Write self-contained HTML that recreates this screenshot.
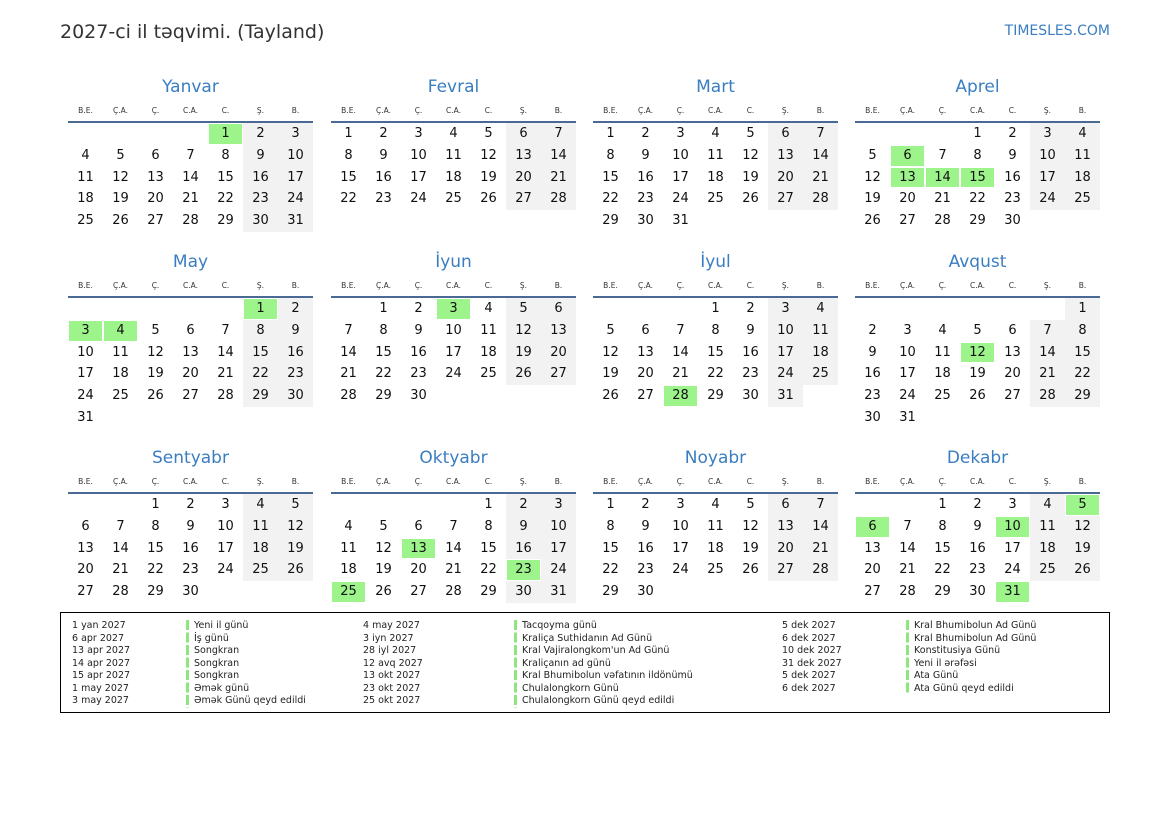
<!DOCTYPE html>
<html><head><meta charset="utf-8"><style>
body{margin:0;width:1169px;height:827px;background:#fff;font-family:"DejaVu Sans","Liberation Sans",sans-serif;color:#111;position:relative;overflow:hidden}
.h1{position:absolute;left:60px;top:21px;font-size:19px;color:#333;font-family:"DejaVu Sans",sans-serif}
.logo{position:absolute;right:59px;top:23px;font-size:14px;color:#3a7dc0}
.m{position:absolute;width:245px}
.t{height:22px;line-height:22px;text-align:center;font-size:17px;color:#3a7dc0}
.wd{display:flex;margin-top:8px;height:10px;line-height:10px;font-size:7.5px;color:#333}
.wd span{width:35px;text-align:center}
.ln{margin-top:5px;height:2px;background:#4a6994}
table{border-collapse:collapse;table-layout:fixed;width:245px}
td{width:35px;height:21.8px;padding:0;text-align:center;font-size:13px;line-height:21.8px}
td.w{background:#f2f2f2}
td.g{background:#9cf48b;box-shadow:inset 0 0 0 1px #fff}
.lg{position:absolute;left:60px;top:612px;width:1048px;height:99px;border:1px solid #000}
.c{position:absolute;top:7px;font-size:9.5px;line-height:12.5px;color:#222}
.b{padding-left:8px;background:linear-gradient(#8ee67e,#8ee67e) 0 0/3px 10px repeat-y;background-size:3px 12.5px;background-image:linear-gradient(#8ee67e 0,#8ee67e 10px,transparent 10px)}
</style></head><body>
<div class="h1">2027-ci il təqvimi. (Tayland)</div>
<div class="logo">TIMESLES.COM</div>

<div class="m" style="left:68px;top:76px"><div class="t">Yanvar</div><div class="wd"><span>B.E.</span><span>Ç.A.</span><span>Ç.</span><span>C.A.</span><span>C.</span><span>Ş.</span><span>B.</span></div><div class="ln"></div><table>
<tr><td></td><td></td><td></td><td></td><td class="g">1</td><td class="w">2</td><td class="w">3</td></tr>
<tr><td>4</td><td>5</td><td>6</td><td>7</td><td>8</td><td class="w">9</td><td class="w">10</td></tr>
<tr><td>11</td><td>12</td><td>13</td><td>14</td><td>15</td><td class="w">16</td><td class="w">17</td></tr>
<tr><td>18</td><td>19</td><td>20</td><td>21</td><td>22</td><td class="w">23</td><td class="w">24</td></tr>
<tr><td>25</td><td>26</td><td>27</td><td>28</td><td>29</td><td class="w">30</td><td class="w">31</td></tr>
</table></div>

<div class="m" style="left:331px;top:76px"><div class="t">Fevral</div><div class="wd"><span>B.E.</span><span>Ç.A.</span><span>Ç.</span><span>C.A.</span><span>C.</span><span>Ş.</span><span>B.</span></div><div class="ln"></div><table>
<tr><td>1</td><td>2</td><td>3</td><td>4</td><td>5</td><td class="w">6</td><td class="w">7</td></tr>
<tr><td>8</td><td>9</td><td>10</td><td>11</td><td>12</td><td class="w">13</td><td class="w">14</td></tr>
<tr><td>15</td><td>16</td><td>17</td><td>18</td><td>19</td><td class="w">20</td><td class="w">21</td></tr>
<tr><td>22</td><td>23</td><td>24</td><td>25</td><td>26</td><td class="w">27</td><td class="w">28</td></tr>
</table></div>

<div class="m" style="left:593px;top:76px"><div class="t">Mart</div><div class="wd"><span>B.E.</span><span>Ç.A.</span><span>Ç.</span><span>C.A.</span><span>C.</span><span>Ş.</span><span>B.</span></div><div class="ln"></div><table>
<tr><td>1</td><td>2</td><td>3</td><td>4</td><td>5</td><td class="w">6</td><td class="w">7</td></tr>
<tr><td>8</td><td>9</td><td>10</td><td>11</td><td>12</td><td class="w">13</td><td class="w">14</td></tr>
<tr><td>15</td><td>16</td><td>17</td><td>18</td><td>19</td><td class="w">20</td><td class="w">21</td></tr>
<tr><td>22</td><td>23</td><td>24</td><td>25</td><td>26</td><td class="w">27</td><td class="w">28</td></tr>
<tr><td>29</td><td>30</td><td>31</td><td></td><td></td><td></td><td></td></tr>
</table></div>

<div class="m" style="left:855px;top:76px"><div class="t">Aprel</div><div class="wd"><span>B.E.</span><span>Ç.A.</span><span>Ç.</span><span>C.A.</span><span>C.</span><span>Ş.</span><span>B.</span></div><div class="ln"></div><table>
<tr><td></td><td></td><td></td><td>1</td><td>2</td><td class="w">3</td><td class="w">4</td></tr>
<tr><td>5</td><td class="g">6</td><td>7</td><td>8</td><td>9</td><td class="w">10</td><td class="w">11</td></tr>
<tr><td>12</td><td class="g">13</td><td class="g">14</td><td class="g">15</td><td>16</td><td class="w">17</td><td class="w">18</td></tr>
<tr><td>19</td><td>20</td><td>21</td><td>22</td><td>23</td><td class="w">24</td><td class="w">25</td></tr>
<tr><td>26</td><td>27</td><td>28</td><td>29</td><td>30</td><td></td><td></td></tr>
</table></div>

<div class="m" style="left:68px;top:251px"><div class="t">May</div><div class="wd"><span>B.E.</span><span>Ç.A.</span><span>Ç.</span><span>C.A.</span><span>C.</span><span>Ş.</span><span>B.</span></div><div class="ln"></div><table>
<tr><td></td><td></td><td></td><td></td><td></td><td class="g">1</td><td class="w">2</td></tr>
<tr><td class="g">3</td><td class="g">4</td><td>5</td><td>6</td><td>7</td><td class="w">8</td><td class="w">9</td></tr>
<tr><td>10</td><td>11</td><td>12</td><td>13</td><td>14</td><td class="w">15</td><td class="w">16</td></tr>
<tr><td>17</td><td>18</td><td>19</td><td>20</td><td>21</td><td class="w">22</td><td class="w">23</td></tr>
<tr><td>24</td><td>25</td><td>26</td><td>27</td><td>28</td><td class="w">29</td><td class="w">30</td></tr>
<tr><td>31</td><td></td><td></td><td></td><td></td><td></td><td></td></tr>
</table></div>

<div class="m" style="left:331px;top:251px"><div class="t">İyun</div><div class="wd"><span>B.E.</span><span>Ç.A.</span><span>Ç.</span><span>C.A.</span><span>C.</span><span>Ş.</span><span>B.</span></div><div class="ln"></div><table>
<tr><td></td><td>1</td><td>2</td><td class="g">3</td><td>4</td><td class="w">5</td><td class="w">6</td></tr>
<tr><td>7</td><td>8</td><td>9</td><td>10</td><td>11</td><td class="w">12</td><td class="w">13</td></tr>
<tr><td>14</td><td>15</td><td>16</td><td>17</td><td>18</td><td class="w">19</td><td class="w">20</td></tr>
<tr><td>21</td><td>22</td><td>23</td><td>24</td><td>25</td><td class="w">26</td><td class="w">27</td></tr>
<tr><td>28</td><td>29</td><td>30</td><td></td><td></td><td></td><td></td></tr>
</table></div>

<div class="m" style="left:593px;top:251px"><div class="t">İyul</div><div class="wd"><span>B.E.</span><span>Ç.A.</span><span>Ç.</span><span>C.A.</span><span>C.</span><span>Ş.</span><span>B.</span></div><div class="ln"></div><table>
<tr><td></td><td></td><td></td><td>1</td><td>2</td><td class="w">3</td><td class="w">4</td></tr>
<tr><td>5</td><td>6</td><td>7</td><td>8</td><td>9</td><td class="w">10</td><td class="w">11</td></tr>
<tr><td>12</td><td>13</td><td>14</td><td>15</td><td>16</td><td class="w">17</td><td class="w">18</td></tr>
<tr><td>19</td><td>20</td><td>21</td><td>22</td><td>23</td><td class="w">24</td><td class="w">25</td></tr>
<tr><td>26</td><td>27</td><td class="g">28</td><td>29</td><td>30</td><td class="w">31</td><td></td></tr>
</table></div>

<div class="m" style="left:855px;top:251px"><div class="t">Avqust</div><div class="wd"><span>B.E.</span><span>Ç.A.</span><span>Ç.</span><span>C.A.</span><span>C.</span><span>Ş.</span><span>B.</span></div><div class="ln"></div><table>
<tr><td></td><td></td><td></td><td></td><td></td><td></td><td class="w">1</td></tr>
<tr><td>2</td><td>3</td><td>4</td><td>5</td><td>6</td><td class="w">7</td><td class="w">8</td></tr>
<tr><td>9</td><td>10</td><td>11</td><td class="g">12</td><td>13</td><td class="w">14</td><td class="w">15</td></tr>
<tr><td>16</td><td>17</td><td>18</td><td>19</td><td>20</td><td class="w">21</td><td class="w">22</td></tr>
<tr><td>23</td><td>24</td><td>25</td><td>26</td><td>27</td><td class="w">28</td><td class="w">29</td></tr>
<tr><td>30</td><td>31</td><td></td><td></td><td></td><td></td><td></td></tr>
</table></div>

<div class="m" style="left:68px;top:447px"><div class="t">Sentyabr</div><div class="wd"><span>B.E.</span><span>Ç.A.</span><span>Ç.</span><span>C.A.</span><span>C.</span><span>Ş.</span><span>B.</span></div><div class="ln"></div><table>
<tr><td></td><td></td><td>1</td><td>2</td><td>3</td><td class="w">4</td><td class="w">5</td></tr>
<tr><td>6</td><td>7</td><td>8</td><td>9</td><td>10</td><td class="w">11</td><td class="w">12</td></tr>
<tr><td>13</td><td>14</td><td>15</td><td>16</td><td>17</td><td class="w">18</td><td class="w">19</td></tr>
<tr><td>20</td><td>21</td><td>22</td><td>23</td><td>24</td><td class="w">25</td><td class="w">26</td></tr>
<tr><td>27</td><td>28</td><td>29</td><td>30</td><td></td><td></td><td></td></tr>
</table></div>

<div class="m" style="left:331px;top:447px"><div class="t">Oktyabr</div><div class="wd"><span>B.E.</span><span>Ç.A.</span><span>Ç.</span><span>C.A.</span><span>C.</span><span>Ş.</span><span>B.</span></div><div class="ln"></div><table>
<tr><td></td><td></td><td></td><td></td><td>1</td><td class="w">2</td><td class="w">3</td></tr>
<tr><td>4</td><td>5</td><td>6</td><td>7</td><td>8</td><td class="w">9</td><td class="w">10</td></tr>
<tr><td>11</td><td>12</td><td class="g">13</td><td>14</td><td>15</td><td class="w">16</td><td class="w">17</td></tr>
<tr><td>18</td><td>19</td><td>20</td><td>21</td><td>22</td><td class="g">23</td><td class="w">24</td></tr>
<tr><td class="g">25</td><td>26</td><td>27</td><td>28</td><td>29</td><td class="w">30</td><td class="w">31</td></tr>
</table></div>

<div class="m" style="left:593px;top:447px"><div class="t">Noyabr</div><div class="wd"><span>B.E.</span><span>Ç.A.</span><span>Ç.</span><span>C.A.</span><span>C.</span><span>Ş.</span><span>B.</span></div><div class="ln"></div><table>
<tr><td>1</td><td>2</td><td>3</td><td>4</td><td>5</td><td class="w">6</td><td class="w">7</td></tr>
<tr><td>8</td><td>9</td><td>10</td><td>11</td><td>12</td><td class="w">13</td><td class="w">14</td></tr>
<tr><td>15</td><td>16</td><td>17</td><td>18</td><td>19</td><td class="w">20</td><td class="w">21</td></tr>
<tr><td>22</td><td>23</td><td>24</td><td>25</td><td>26</td><td class="w">27</td><td class="w">28</td></tr>
<tr><td>29</td><td>30</td><td></td><td></td><td></td><td></td><td></td></tr>
</table></div>

<div class="m" style="left:855px;top:447px"><div class="t">Dekabr</div><div class="wd"><span>B.E.</span><span>Ç.A.</span><span>Ç.</span><span>C.A.</span><span>C.</span><span>Ş.</span><span>B.</span></div><div class="ln"></div><table>
<tr><td></td><td></td><td>1</td><td>2</td><td>3</td><td class="w">4</td><td class="g">5</td></tr>
<tr><td class="g">6</td><td>7</td><td>8</td><td>9</td><td class="g">10</td><td class="w">11</td><td class="w">12</td></tr>
<tr><td>13</td><td>14</td><td>15</td><td>16</td><td>17</td><td class="w">18</td><td class="w">19</td></tr>
<tr><td>20</td><td>21</td><td>22</td><td>23</td><td>24</td><td class="w">25</td><td class="w">26</td></tr>
<tr><td>27</td><td>28</td><td>29</td><td>30</td><td class="g">31</td><td></td><td></td></tr>
</table></div>

<div class="lg">
<div class="c" style="left:11px">1 yan 2027<br>6 apr 2027<br>13 apr 2027<br>14 apr 2027<br>15 apr 2027<br>1 may 2027<br>3 may 2027</div>
<div class="c b" style="left:125px">Yeni il günü<br>İş günü<br>Songkran<br>Songkran<br>Songkran<br>Əmək günü<br>Əmək Günü qeyd edildi</div>
<div class="c" style="left:302px">4 may 2027<br>3 iyn 2027<br>28 iyl 2027<br>12 avq 2027<br>13 okt 2027<br>23 okt 2027<br>25 okt 2027</div>
<div class="c b" style="left:453px">Tacqoyma günü<br>Kraliça Suthidanın Ad Günü<br>Kral Vajiralongkom'un Ad Günü<br>Kraliçanın ad günü<br>Kral Bhumibolun vəfatının ildönümü<br>Chulalongkorn Günü<br>Chulalongkorn Günü qeyd edildi</div>
<div class="c" style="left:721px">5 dek 2027<br>6 dek 2027<br>10 dek 2027<br>31 dek 2027<br>5 dek 2027<br>6 dek 2027</div>
<div class="c b" style="left:845px">Kral Bhumibolun Ad Günü<br>Kral Bhumibolun Ad Günü<br>Konstitusiya Günü<br>Yeni il ərəfəsi<br>Ata Günü<br>Ata Günü qeyd edildi</div>
</div>
</body></html>
